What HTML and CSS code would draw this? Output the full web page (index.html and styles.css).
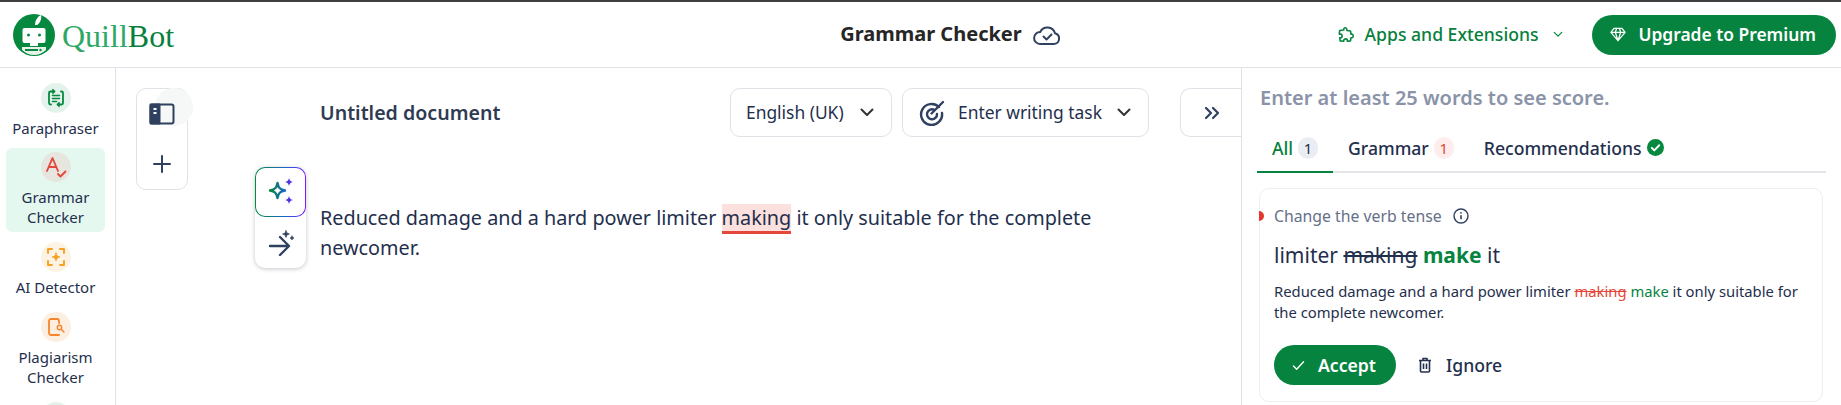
FILE: index.html
```html
<!DOCTYPE html>
<html lang="en">
<head>
<meta charset="utf-8">
<title>QuillBot Grammar Checker</title>
<link rel="stylesheet" href="styles.css">
</head>
<body>
<div class="app">
  <header class="topbar">
    <div class="brand">
      <svg class="brand-mark" viewBox="0 0 42 42" width="42" height="42">
        <circle cx="21" cy="21" r="21" fill="#06893f"/>
        <path d="M22 11c0-4 2-8 6-10 1 4-1 8-4 10z" fill="#fff"/>
        <rect x="9.500" y="14" width="23" height="15" rx="2" fill="#fff"/>
        <circle cx="15.500" cy="21" r="1.500" fill="#06893f"/>
        <circle cx="26.500" cy="21" r="1.500" fill="#06893f"/>
        <rect x="17" y="29" width="8" height="3" fill="#fff"/>
        <path d="M9 33h24v3c-3 3-8 5-12 5s-9-2-12-5z" fill="#e8f3ec"/>
        <rect x="12" y="35" width="13" height="2" fill="#06893f"/>
        <circle cx="27.500" cy="36" r="1.200" fill="#06893f"/>
      </svg>
      <span class="wordmark"><span class="wm-light">Quill</span><span class="wm-dark">Bot</span></span>
    </div>
    <div class="doc-state">
      <span class="doc-state-name">Grammar Checker</span>
      <svg viewBox="0 0 28 22" width="28" height="22" fill="none" stroke="#2f4060" stroke-width="2" stroke-linecap="round" stroke-linejoin="round">
        <path d="M7 20h14a5.500 5.500 0 0 0 1-10.800A8 8 0 0 0 7.200 8 6 6 0 0 0 7 20z"/>
        <path d="M10.500 12.500l3 3 5-5"/>
      </svg>
    </div>
    <div class="top-actions">
      <a class="apps">
        <svg viewBox="0 0 20 20" width="18" height="18" fill="none" stroke="#06893f" stroke-width="1.800" stroke-linejoin="round">
          <path d="M8 2.500c1-1 3-.5 3 1.500v1l4 .5.500 3.500h1c2 0 2 4 0 4h-1l-.5 3.500-3.500.5v-.8c0-2.500-4-2.500-4 0v.8l-4-.5-.5-3.500h.8c2.500 0 2.500-4 0-4H2.500L3 5l4.500-.5c-.2-1 0-1.500.5-2z"/>
        </svg>
        <span class="lift">Apps and Extensions</span>
        <svg viewBox="0 0 12 8" width="10" height="7" fill="none" stroke="#06893f" stroke-width="1.500" stroke-linecap="round" stroke-linejoin="round"><path d="M1.500 1.500L6 6l4.500-4.500"/></svg>
      </a>
      <button class="upgrade">
        <svg viewBox="0 0 18 16" width="16" height="15" fill="none" stroke="#fff" stroke-width="1.400" stroke-linejoin="round">
          <path d="M4.500 1h9L17 5.500 9 15 1 5.500zM1 5.500h16M6 5.500L9 15l3-9.500M6 5.500L7.500 1M12 5.500L10.500 1"/>
        </svg>
        <span class="lift">Upgrade to Premium</span>
      </button>
    </div>
  </header>

  <div class="body">
    <nav class="sidebar">
      <a class="nav-item">
        <span class="nav-icon tint-green">
          <svg viewBox="0 0 20 20" width="20" height="20" fill="none" stroke="#06893f" stroke-width="1.800" stroke-linecap="round" stroke-linejoin="round">
            <path d="M8 3.500H4.500A1.500 1.500 0 0 0 3 5v10a1.500 1.500 0 0 0 1.500 1.500H5M12 16.500h3.500A1.500 1.500 0 0 0 17 15V5a1.500 1.500 0 0 0-1.500-1.500H15"/>
            <path d="M6.500 7.500h7M6.500 10.500h7M6.500 13.500h4" stroke-width="1.500"/>
            <path d="M7 1.500l2.200 2-2.200 2zM13 14.500l-2.200 2 2.200 2z" fill="#06893f" stroke-width="1"/>
          </svg>
        </span>
        <span class="nav-label">Paraphraser</span>
      </a>
      <a class="nav-item is-active">
        <span class="nav-icon tint-grey">
          <svg viewBox="0 0 22 22" width="22" height="22" fill="none" stroke="#e5483a" stroke-width="1.900" stroke-linecap="round" stroke-linejoin="round">
            <path d="M2 15L7.500 2 13 15M3.800 11h7.400"/>
            <path d="M13 18l2.500 2.500 5-5"/>
          </svg>
        </span>
        <span class="nav-label">Grammar Checker</span>
      </a>
      <a class="nav-item">
        <span class="nav-icon tint-amber">
          <svg viewBox="0 0 20 20" width="20" height="20" fill="none" stroke="#f8a023" stroke-width="1.900" stroke-linecap="round" stroke-linejoin="round">
            <path d="M6 2H2v4M14 2h4v4M6 18H2v-4M14 18h4v-4"/>
            <path d="M10 6c.5 2.500 1.500 3.500 4 4-2.500.5-3.500 1.500-4 4-.5-2.500-1.500-3.500-4-4 2.500-.5 3.500-1.500 4-4z" fill="#f8a023" stroke-width=".8"/>
          </svg>
        </span>
        <span class="nav-label">AI Detector</span>
      </a>
      <a class="nav-item">
        <span class="nav-icon tint-orange">
          <svg viewBox="0 0 20 20" width="20" height="20" fill="none" stroke="#f5842b" stroke-width="1.800" stroke-linecap="round" stroke-linejoin="round">
            <path d="M13 18H5a2 2 0 0 1-2-2V4a2 2 0 0 1 2-2h6a2 2 0 0 1 2 2v2"/>
            <circle cx="13.500" cy="10.500" r="2.200" stroke-width="1.400"/>
            <path d="M15.200 12.200L18 15" stroke-width="1.400"/>
          </svg>
        </span>
        <span class="nav-label">Plagiarism Checker</span>
      </a>
      <a class="nav-item">
        <span class="nav-icon tint-green"></span>
      </a>
    </nav>

    <main class="editor">
      <div class="tool-rail">
        <div class="tool-box">
          <span class="tool-halo"></span>
          <button class="tool-btn">
            <svg viewBox="0 0 26 22" width="26" height="22" fill="none" stroke="#2f4060" stroke-width="2" stroke-linejoin="round">
              <rect x="1.500" y="1.500" width="23" height="19" rx="2"/>
              <path d="M1.500 1.500h9v19h-9z" fill="#2f4060"/>
              <path d="M4.500 6h3M4.500 10h3" stroke="#fff" stroke-width="2"/>
            </svg>
          </button>
          <button class="tool-btn">
            <svg viewBox="0 0 20 20" width="20" height="20" fill="none" stroke="#2f4060" stroke-width="2" stroke-linecap="round"><path d="M10 2v16M2 10h16"/></svg>
          </button>
        </div>
      </div>
      <div class="magic-rail">
        <div class="magic-box">
          <div class="magic-on">
            <svg viewBox="0 0 30 30" width="30" height="30">
              <defs><linearGradient id="spark" x1="0" y1="0" x2="1" y2="0"><stop offset="0" stop-color="#06893f"/><stop offset="1" stop-color="#1c66c8"/></linearGradient></defs>
              <path d="M11.500 6c1 5 2.500 6.500 7.500 7.500-5 1-6.500 2.500-7.500 7.500-1-5-2.500-6.500-7.500-7.500 5-1 6.500-2.500 7.500-7.500z" fill="none" stroke="url(#spark)" stroke-width="2.400" stroke-linejoin="round"/>
              <path d="M23 1c.5 2.500 1.500 3.500 4 4-2.500.5-3.500 1.500-4 4-.5-2.500-1.500-3.500-4-4 2.500-.5 3.500-1.500 4-4zM23 19c.5 2.500 1.500 3.500 4 4-2.500.5-3.500 1.500-4 4-.5-2.500-1.500-3.500-4-4 2.500-.5 3.500-1.500 4-4z" fill="#4f35e8"/>
            </svg>
          </div>
          <div class="magic-off">
            <svg viewBox="0 0 28 28" width="28" height="28" fill="none" stroke="#2f4060" stroke-width="2.400" stroke-linecap="round" stroke-linejoin="round">
              <path d="M3 17h17M13 8l9 9-9 9"/>
              <path d="M19 1.500l1 2.500 2.500 1-2.500 1-1 2.500-1-2.500-2.500-1 2.500-1zM25 7l.7 1.300L27 9l-1.300.7L25 11l-.7-1.300L23 9l1.300-.7z" fill="#2f4060" stroke-width=".6"/>
            </svg>
          </div>
        </div>
      </div>
      <div class="doc">
        <div class="doc-bar">
          <h1 class="doc-title">Untitled document</h1>
          <div class="doc-controls">
            <button class="select select-lang">
              <span class="lift">English (UK)</span>
              <svg viewBox="0 0 14 9" width="14" height="9" fill="none" stroke="#333" stroke-width="2" stroke-linecap="round" stroke-linejoin="round"><path d="M1.500 1.500L7 7l5.500-5.500"/></svg>
            </button>
            <button class="select select-task">
              <svg viewBox="0 0 26 26" width="26" height="26" fill="none" stroke="#2f4060" stroke-width="2.400" stroke-linecap="round">
                <path d="M20 7a10.500 10.500 0 1 0 3 6"/>
                <path d="M15.500 10a5 5 0 1 0 2.500 4"/>
                <path d="M12.500 13.500L24 2"/>
              </svg>
              <span class="select-text lift">Enter writing task</span>
              <svg viewBox="0 0 14 9" width="14" height="9" fill="none" stroke="#333" stroke-width="2" stroke-linecap="round" stroke-linejoin="round"><path d="M1.500 1.500L7 7l5.500-5.500"/></svg>
            </button>
            <button class="collapse">
              <svg viewBox="0 0 16 14" width="16" height="14" fill="none" stroke="#2f4060" stroke-width="2.200" stroke-linecap="round" stroke-linejoin="round"><path d="M2 2l5 5-5 5M9 2l5 5-5 5"/></svg>
            </button>
          </div>
        </div>
        <p class="doc-text">Reduced damage and a hard power limiter <mark class="flag">making</mark> it only suitable for the complete newcomer.</p>
      </div>
    </main>

    <aside class="panel">
      <p class="score">Enter at least 25 words to see score.</p>
      <div class="tabs">
        <div class="tab is-current"><span>All</span><span class="count count-all">1</span></div>
        <div class="tab"><span>Grammar</span><span class="count count-red">1</span></div>
        <div class="tab"><span>Recommendations</span>
          <svg viewBox="0 0 16 16" width="17" height="17"><circle cx="8" cy="8" r="8" fill="#06893f"/><path d="M4.500 8.300l2.400 2.400 4.600-4.800" fill="none" stroke="#fff" stroke-width="1.800" stroke-linecap="round" stroke-linejoin="round"/></svg>
        </div>
      </div>
      <article class="card">
        <span class="card-dot"></span>
        <div class="card-head">
          <span>Change the verb tense</span>
          <svg viewBox="0 0 16 16" width="16" height="16" fill="none" stroke="#2f4060" stroke-width="1.400"><circle cx="8" cy="8" r="7"/><path d="M8 7.200v4" stroke-width="1.600"/><circle cx="8" cy="4.800" r=".9" fill="#2f4060" stroke="none"/></svg>
        </div>
        <p class="fix">limiter <s class="fix-old">making</s> <b class="fix-new">make</b> it</p>
        <p class="context">Reduced damage and a hard power limiter <s class="ctx-old">making</s> <span class="ctx-new">make</span> it only suitable for the complete newcomer.</p>
        <div class="card-actions">
          <button class="accept">
            <svg viewBox="0 0 14 12" width="13" height="11" fill="none" stroke="#fff" stroke-width="1.500" stroke-linecap="round" stroke-linejoin="round"><path d="M1.500 6.500l3.500 3.500 7.500-8"/></svg>
            <span>Accept</span>
          </button>
          <button class="ignore">
            <svg viewBox="0 0 14 16" width="14" height="16" fill="none" stroke="#23324f" stroke-width="1.600" stroke-linejoin="round"><path d="M1 3.500h12M2.500 3.500V14a1 1 0 0 0 1 1h7a1 1 0 0 0 1-1V3.500M5 3.500V1.500h4v2M5.500 6.500v5.500M8.500 6.500v5.500"/></svg>
            <span>Ignore</span>
          </button>
        </div>
      </article>
    </aside>
  </div>
</div>
</body>
</html>
```
FILE: styles.css
```css
* { box-sizing: border-box; }
html, body { margin: 0; height: 100%; overflow: hidden; background: #fff; }
body { font-family: "Noto Sans", "Open Sans", sans-serif; color: #1f2f4d; }
button { font: inherit; color: inherit; background: #fff; cursor: pointer; }
p, h1 { margin: 0; }
.lift { padding-bottom: 2px; }

.app { display: flex; flex-direction: column; height: 405px; border-top: 2px solid #404040; }

.topbar { display: grid; grid-template-columns: 1fr auto 1fr; align-items: center; height: 66px; padding: 0 5px 0 13px; border-bottom: 1px solid #e0e2e8; flex: none; }
.brand { display: flex; align-items: center; gap: 7px; }
.brand-mark { display: block; }
.wordmark { font-family: "Liberation Serif", serif; font-size: 32px; line-height: 1; position: relative; top: 1px; }
.wm-light { color: #2fa866; }
.wm-dark { color: #06803c; }
.doc-state { display: flex; align-items: center; gap: 11px; padding-left: 52px; }
.doc-state-name { font-size: 20px; font-weight: 700; color: #262626; padding-bottom: 2px; }
.top-actions { display: flex; align-items: center; justify-content: flex-end; gap: 29px; }
.apps { display: flex; align-items: center; gap: 10px; color: #06803c; font-size: 17.600px; font-weight: 500; white-space: nowrap; }
.apps svg:last-child { margin-left: 5px; }
.upgrade { display: flex; align-items: center; gap: 12px; height: 40px; padding: 0 20px 0 18px; border: 0; border-radius: 20px; background: #06843f; color: #fff; font-size: 17.400px; font-weight: 600; white-space: nowrap; }

.body { display: flex; flex: 1; min-height: 0; overflow: hidden; }

.sidebar { width: 116px; flex: none; display: flex; flex-direction: column; align-items: center; padding: 15px 10px 0 6px; border-right: 1px solid #dfe1e6; overflow: hidden; }
.nav-item { display: flex; flex-direction: column; align-items: center; width: 99px; margin-bottom: 15px; font-size: 15px; line-height: 20px; text-align: center; border-radius: 6px; flex: none; }
.nav-item:has(+ .is-active) { margin-bottom: 10px; }
.nav-item.is-active { background: #e5f8f0; padding: 4px 0 5px; margin-bottom: 10px; }
.nav-icon { display: flex; align-items: center; justify-content: center; width: 30px; height: 30px; border-radius: 50%; margin-bottom: 5px; }
.nav-label { display: block; width: 90px; }
.tint-green { background: #e3f2ea; }
.tint-grey { background: #e6e6df; }
.tint-amber { background: #fdf3e4; }
.tint-orange { background: #fdeee2; }

.editor { width: 1125px; flex: none; display: flex; padding: 20px 0 0 20px; overflow: hidden; }
.tool-rail { width: 119px; flex: none; }
.tool-box { position: relative; width: 52px; height: 102px; border: 1px solid #e0e2e8; border-radius: 10px; display: flex; flex-direction: column; align-items: center; }
.tool-halo { position: absolute; left: 18px; top: -1px; width: 38px; height: 38px; border-radius: 50%; background: #f5f8f7; }
.tool-btn { position: relative; width: 50px; height: 50px; border: 0; background: none; display: flex; align-items: center; justify-content: center; padding: 0; }

.magic-rail { width: 65px; flex: none; padding-top: 79px; }
.magic-box { width: 51px; height: 101px; border-radius: 10px; background: #fff; box-shadow: 0 1px 4px rgba(40, 50, 70, .28); }
.magic-on { height: 50px; border-radius: 10px; border: 1.500px solid transparent; background: linear-gradient(#fff, #fff) padding-box, linear-gradient(90deg, #06893f, #1c66c8 60%, #7a1cff) border-box; display: flex; align-items: center; justify-content: center; }
.magic-off { height: 51px; display: flex; align-items: center; justify-content: center; }

.doc { flex: 1; min-width: 0; }
.doc-bar { display: flex; align-items: center; justify-content: space-between; height: 49px; }
.doc-title { font-size: 19.600px; font-weight: 600; color: #2f3b52; }
.doc-controls { display: flex; align-items: center; gap: 10px; }
.select { display: flex; align-items: center; height: 49px; border: 1px solid #e0e2e8; border-radius: 10px; font-size: 17.400px; color: #1f2f4d; padding: 0; }
.select-lang { width: 162px; padding: 0 17px 0 15px; justify-content: space-between; }
.select-task { width: 247px; padding: 0 17px 0 16px; }
.select-text { flex: 1; text-align: left; padding-left: 13px; }
.collapse { width: 61px; height: 49px; margin-left: 21px; border: 1px solid #e0e2e8; border-right: 0; border-radius: 10px 0 0 10px; display: flex; align-items: center; padding: 0 0 0 23px; }
.doc-text { margin-top: 66px; width: 800px; font-size: 19.800px; line-height: 30px; color: #1f2f4d; }
.flag { background: #fbe0dd; color: inherit; border-bottom: 3px solid #e5483a; }

.panel { flex: 1; min-width: 0; padding: 16px 15px 0 15px; border-left: 1px solid #e0e2e8; }
.score { font-size: 20px; font-weight: 600; color: #8a93a8; line-height: 27px; padding-left: 3px; }
.tabs { display: flex; align-items: center; margin-top: 15px; height: 47px; border-bottom: 2px solid #e4e5e8; font-size: 17.600px; font-weight: 500; }
.tab { display: flex; align-items: center; gap: 5px; height: 47px; padding: 0 15px 2px; margin-bottom: -2px; border-bottom: 2px solid transparent; }
.tab.is-current { color: #06803c; border-bottom-color: #06843f; }
.count { display: inline-flex; align-items: center; justify-content: center; width: 20px; height: 22px; border-radius: 11px; font-size: 15px; font-weight: 400; }
.count-all { background: #eaedf3; color: #1f2f4d; }
.count-red { background: #fdeeed; color: #e5483a; }

.card { position: relative; margin: 15px 3px 0 2px; height: 214px; padding: 17px 14px 0 14px; border: 1px solid #eceef1; border-radius: 10px; }
.card-dot { position: absolute; left: -1px; top: 22px; width: 5px; height: 10px; border-radius: 0 5px 5px 0; background: #e5372b; }
.card-head { display: flex; align-items: center; gap: 11px; font-size: 15.800px; color: #667089; line-height: 20px; }
.fix { margin-top: 14px; font-size: 21px; line-height: 30px; }
.fix-new { color: #06843f; font-weight: 700; }
.context { margin-top: 11px; font-size: 14.800px; line-height: 21px; }
.ctx-old { color: #e5483a; }
.ctx-new { color: #06843f; }
.card-actions { display: flex; align-items: center; gap: 22px; margin-top: 22px; }
.accept { display: flex; align-items: center; gap: 13px; height: 40px; width: 122px; padding: 0 0 0 18px; border: 0; border-radius: 20px; background: #06843f; color: #fff; font-size: 17.600px; font-weight: 600; }
.ignore { display: flex; align-items: center; gap: 14px; border: 0; background: none; padding: 0; font-size: 17.600px; font-weight: 500; }
```
